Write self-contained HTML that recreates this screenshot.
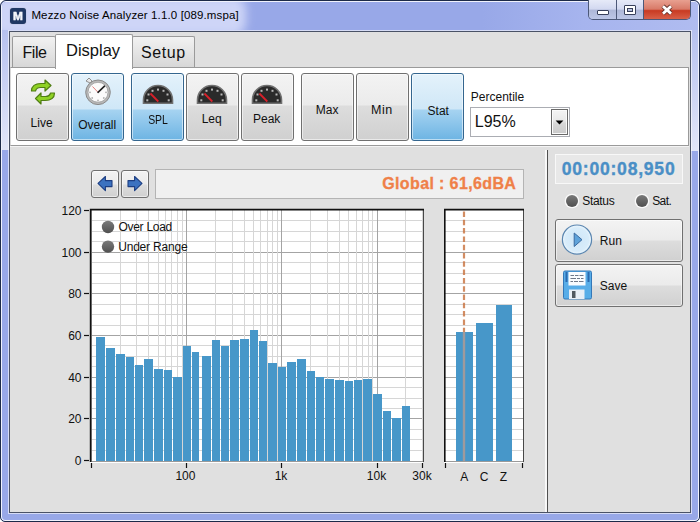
<!DOCTYPE html>
<html><head><meta charset="utf-8"><style>
html,body{margin:0;padding:0;width:700px;height:522px;overflow:hidden;background:#fff}
.t{position:absolute;white-space:nowrap;line-height:1;font-family:"Liberation Sans", sans-serif}
</style></head><body>
<div style="position:absolute;left:0;top:0;width:700px;height:522px;box-sizing:border-box;border:1px solid #1c2a48;border-radius:6px 6px 5px 5px;background:#98a8e8;overflow:hidden"><div style="position:absolute;left:0;top:0;right:0;bottom:0;border:1px solid rgba(255,255,255,0.85);border-radius:5px 5px 4px 4px"></div></div>
<div style="position:absolute;left:2px;top:2px;width:696px;height:28px;border-radius:4px 4px 0 0;overflow:hidden;background:linear-gradient(to right,#98a8e8 0px,#98a8e8 480px,#a6b4ee 580px,#b0bcf0 696px)"><div style="position:absolute;left:-10px;top:-6px;width:254px;height:40px;border-radius:14px;background:#ced5f7;filter:blur(5px)"></div></div>
<div style="position:absolute;left:2px;top:30px;width:7px;height:120px;background:linear-gradient(#b6c1f0,#e2e6f8)"></div>
<div style="position:absolute;left:691px;top:30px;width:7px;height:121px;background:linear-gradient(#b6c1f0,#e2e6f8)"></div>
<div style="position:absolute;left:8px;top:30px;width:684px;height:484px;box-sizing:border-box;border:1px solid rgba(255,255,255,0.6)"></div>
<div style="position:absolute;left:9px;top:31px;width:682px;height:482px;box-sizing:border-box;border:1px solid #4a5266;background:#e0e0e0"></div>
<div style="position:absolute;left:10px;top:8px;width:16px;height:16px;border-radius:3px;background:#1f3864;box-shadow:0 0 1px #889"></div>
<div class="t" style="left:10px;top:10px;width:16px;text-align:center;font-size:11px;font-weight:bold;color:#f4f6fa;line-height:12px;-webkit-text-stroke:0.5px #f4f6fa;transform:scaleX(1.08)">M</div>
<div class="t" style="left:31.4px;top:10.37px;font-size:11.5px;color:#000;font-weight:normal;letter-spacing:0.13px">Mezzo Noise Analyzer 1.1.0 [089.mspa]</div>
<div style="position:absolute;left:588px;top:0px;width:103px;height:20px;box-sizing:border-box;border:1px solid #4c5878;border-top:none;border-radius:0 0 5px 5px;overflow:hidden"><div style="position:absolute;left:0;top:0;width:27px;height:19px;background:linear-gradient(#e6eaf8 0%,#d2d8f0 48%,#aeb8d8 53%,#bcc6e6 100%);border-right:1px solid #4c5878"></div><div style="position:absolute;left:28px;top:0;width:26px;height:19px;background:linear-gradient(#e6eaf8 0%,#d2d8f0 48%,#aeb8d8 53%,#bcc6e6 100%);border-right:1px solid #4c5878"></div><div style="position:absolute;left:55px;top:0;width:48px;height:19px;background:linear-gradient(#e8a090 0%,#d87a68 48%,#c83a22 56%,#d86048 100%)"></div></div>
<div style="position:absolute;left:597px;top:10px;width:12px;height:5px;box-sizing:border-box;background:#fff;border:1px solid #38405a;border-radius:1px"></div>
<div style="position:absolute;left:624px;top:5px;width:12px;height:10px;box-sizing:border-box;background:transparent;border:1px solid #38405a;border-radius:1px"><div style="position:absolute;left:0;top:0;width:10px;height:8px;box-sizing:border-box;border:2px solid #fff;border-top-width:2px"></div><div style="position:absolute;left:2px;top:2px;width:6px;height:4px;box-sizing:border-box;border:1px solid #38405a"></div></div>
<svg style="position:absolute;left:660px;top:4px" width="14" height="12" viewBox="0 0 14 12"><path d="M3 2.2 L11 9.6 M11 2.2 L3 9.6" stroke="#5a2a22" stroke-width="4.4" stroke-linecap="butt"/><path d="M3 2.2 L11 9.6 M11 2.2 L3 9.6" stroke="#fff" stroke-width="2.8" stroke-linecap="butt"/></svg>
<div style="position:absolute;left:12px;top:36px;width:44px;height:32px;box-sizing:border-box;border:1px solid #9a9a9a;border-bottom:none;border-radius:2px 2px 0 0;background:linear-gradient(#f2f2f2,#e4e4e4 50%,#d6d6d6)"></div>
<div style="position:absolute;left:132px;top:36px;width:63px;height:32px;box-sizing:border-box;border:1px solid #9a9a9a;border-bottom:none;border-radius:2px 2px 0 0;background:linear-gradient(#f2f2f2,#e4e4e4 50%,#d6d6d6)"></div>
<div style="position:absolute;left:10px;top:67px;width:679px;height:79px;box-sizing:border-box;border-top:1px solid #9a9a9a;border-bottom:1px solid #9a9a9a;border-right:1px solid #9a9a9a;border-left:1px solid #d8d8d8;background:#fff"></div>
<div style="position:absolute;left:55px;top:34px;width:78px;height:35px;box-sizing:border-box;border:1px solid #9a9a9a;border-bottom:none;border-radius:2px 2px 0 0;background:#fff"></div>
<div class="t" style="left:22.6px;top:44.86px;font-size:16px;color:#111;font-weight:normal;letter-spacing:-0.5px">File</div>
<div class="t" style="left:66px;top:41.83px;font-size:16.5px;color:#111;font-weight:normal;">Display</div>
<div class="t" style="left:141px;top:44.86px;font-size:16px;color:#111;font-weight:normal;letter-spacing:0.6px">Setup</div>
<div style="position:absolute;left:16px;top:73px;width:53px;height:68px;box-sizing:border-box;border:1px solid #707070;border-radius:3px;background:linear-gradient(#f3f3f3 0px,#ebebeb 31px,#dddddd 32px,#cfcfcf 68px);box-shadow:inset 0 0 0 1px rgba(255,255,255,0.55)"></div>
<div style="position:absolute;left:71px;top:73px;width:53px;height:68px;box-sizing:border-box;border:1px solid #34668f;border-radius:3px;background:linear-gradient(#e4f2fb 0px,#cfe7f7 35px,#a6d3f1 36px,#69b2e2 68px);box-shadow:inset 0 0 0 1px rgba(255,255,255,0.55)"></div>
<div style="position:absolute;left:131px;top:73px;width:53px;height:68px;box-sizing:border-box;border:1px solid #34668f;border-radius:3px;background:linear-gradient(#e4f2fb 0px,#cfe7f7 35px,#a6d3f1 36px,#69b2e2 68px);box-shadow:inset 0 0 0 1px rgba(255,255,255,0.55)"></div>
<div style="position:absolute;left:186px;top:73px;width:53px;height:68px;box-sizing:border-box;border:1px solid #707070;border-radius:3px;background:linear-gradient(#f3f3f3 0px,#ebebeb 31px,#dddddd 32px,#cfcfcf 68px);box-shadow:inset 0 0 0 1px rgba(255,255,255,0.55)"></div>
<div style="position:absolute;left:241px;top:73px;width:53px;height:68px;box-sizing:border-box;border:1px solid #707070;border-radius:3px;background:linear-gradient(#f3f3f3 0px,#ebebeb 31px,#dddddd 32px,#cfcfcf 68px);box-shadow:inset 0 0 0 1px rgba(255,255,255,0.55)"></div>
<div style="position:absolute;left:301px;top:73px;width:53px;height:68px;box-sizing:border-box;border:1px solid #707070;border-radius:3px;background:linear-gradient(#f3f3f3 0px,#ebebeb 31px,#dddddd 32px,#cfcfcf 68px);box-shadow:inset 0 0 0 1px rgba(255,255,255,0.55)"></div>
<div style="position:absolute;left:356px;top:73px;width:53px;height:68px;box-sizing:border-box;border:1px solid #707070;border-radius:3px;background:linear-gradient(#f3f3f3 0px,#ebebeb 31px,#dddddd 32px,#cfcfcf 68px);box-shadow:inset 0 0 0 1px rgba(255,255,255,0.55)"></div>
<div style="position:absolute;left:411px;top:73px;width:53px;height:68px;box-sizing:border-box;border:1px solid #34668f;border-radius:3px;background:linear-gradient(#e4f2fb 0px,#cfe7f7 35px,#a6d3f1 36px,#69b2e2 68px);box-shadow:inset 0 0 0 1px rgba(255,255,255,0.55)"></div>
<div class="t" style="left:11.60px;width:60px;text-align:center;top:117.44px;font-size:12px;color:#111;font-weight:normal;">Live</div>
<div class="t" style="left:67.20px;width:60px;text-align:center;top:118.94px;font-size:12px;color:#111;font-weight:normal;">Overall</div>
<div class="t" style="left:128.40px;width:60px;text-align:center;top:113.84px;font-size:12px;color:#111;font-weight:normal;transform:scaleX(0.87)">SPL</div>
<div class="t" style="left:181.70px;width:60px;text-align:center;top:112.84px;font-size:12px;color:#111;font-weight:normal;">Leq</div>
<div class="t" style="left:236.70px;width:60px;text-align:center;top:112.84px;font-size:12px;color:#111;font-weight:normal;">Peak</div>
<div class="t" style="left:297.20px;width:60px;text-align:center;top:103.84px;font-size:12px;color:#111;font-weight:normal;">Max</div>
<div class="t" style="left:351.80px;width:60px;text-align:center;top:104.02px;font-size:12.5px;color:#111;font-weight:normal;letter-spacing:0.5px">Min</div>
<div class="t" style="left:408.30px;width:60px;text-align:center;top:104.74px;font-size:12px;color:#111;font-weight:normal;">Stat</div>
<svg style="position:absolute;left:28px;top:78px" width="30" height="28" viewBox="0 0 30 28">
<path d="M3.5 13 C3.5 8 7 5.5 13 5.5 L17 5.5 L17 2 L23 7.5 L17 13 L17 9.5 L12.5 9.5 C9 9.5 8 11 7.5 13 Z" fill="#8fd124" stroke="#4f7d12" stroke-width="1.2" stroke-linejoin="round"/>
<path d="M26.5 15 C26.5 20 23 22.5 17 22.5 L13 22.5 L13 26 L7.5 20.5 L13 15 L13 18.5 L17.5 18.5 C21 18.5 22 17 22.5 15 Z" fill="#8fd124" stroke="#4f7d12" stroke-width="1.2" stroke-linejoin="round"/>
</svg>
<svg style="position:absolute;left:82px;top:76px" width="32" height="32" viewBox="0 0 32 32">
<path d="M4 5 L7 2 L10 5 L8 7 Z" fill="#e8e8e8" stroke="#909090" stroke-width="1"/>
<circle cx="16" cy="16.3" r="12.3" fill="#b8b8b8" stroke="#8a8a8a" stroke-width="1"/>
<circle cx="16" cy="16.3" r="10" fill="#fbfbfb" stroke="#a0a0a0" stroke-width="0.8"/>
<g fill="#b0b0b0"><circle cx="16" cy="24.5" r="0.9"/><circle cx="10.2" cy="22" r="0.9"/><circle cx="21.8" cy="22" r="0.9"/><circle cx="8" cy="16.3" r="0.9"/><circle cx="24" cy="16.3" r="0.9"/></g>
<path d="M16 16.3 L10.5 10.5" stroke="#e07070" stroke-width="0.9"/>
<path d="M16 16.3 L22.5 10.2" stroke="#222" stroke-width="1.6" stroke-linecap="round"/>
</svg>
<svg style="position:absolute;left:142px;top:84px" width="32" height="22" viewBox="0 0 32 22">
<path d="M1.5 19.2 L1.5 16 A14.5 14.5 0 0 1 30.5 16 L30.5 19.2 Z" fill="#2a2a2a" stroke="#707070" stroke-width="1.6"/>
<g fill="#b8b8b8"><rect x="4.3" y="15.3" width="2" height="2"/><rect x="5.5" y="9.5" width="2" height="2"/><rect x="9.5" y="5.8" width="2" height="2"/><rect x="15" y="4.6" width="2" height="2"/><rect x="20.5" y="5.8" width="2" height="2"/><rect x="24.5" y="9.5" width="2" height="2"/><rect x="25.7" y="15.3" width="2" height="2"/></g>
<path d="M8.4 9.5 L16.3 17.5" stroke="#d8202a" stroke-width="1.8"/>
</svg>
<svg style="position:absolute;left:196px;top:84px" width="32" height="22" viewBox="0 0 32 22">
<path d="M1.5 19.2 L1.5 16 A14.5 14.5 0 0 1 30.5 16 L30.5 19.2 Z" fill="#2a2a2a" stroke="#707070" stroke-width="1.6"/>
<g fill="#b8b8b8"><rect x="4.3" y="15.3" width="2" height="2"/><rect x="5.5" y="9.5" width="2" height="2"/><rect x="9.5" y="5.8" width="2" height="2"/><rect x="15" y="4.6" width="2" height="2"/><rect x="20.5" y="5.8" width="2" height="2"/><rect x="24.5" y="9.5" width="2" height="2"/><rect x="25.7" y="15.3" width="2" height="2"/></g>
<path d="M8.4 9.5 L16.3 17.5" stroke="#d8202a" stroke-width="1.8"/>
</svg>
<svg style="position:absolute;left:251px;top:84px" width="32" height="22" viewBox="0 0 32 22">
<path d="M1.5 19.2 L1.5 16 A14.5 14.5 0 0 1 30.5 16 L30.5 19.2 Z" fill="#2a2a2a" stroke="#707070" stroke-width="1.6"/>
<g fill="#b8b8b8"><rect x="4.3" y="15.3" width="2" height="2"/><rect x="5.5" y="9.5" width="2" height="2"/><rect x="9.5" y="5.8" width="2" height="2"/><rect x="15" y="4.6" width="2" height="2"/><rect x="20.5" y="5.8" width="2" height="2"/><rect x="24.5" y="9.5" width="2" height="2"/><rect x="25.7" y="15.3" width="2" height="2"/></g>
<path d="M8.4 9.5 L16.3 17.5" stroke="#d8202a" stroke-width="1.8"/>
</svg>
<div class="t" style="left:470.8px;top:90.84px;font-size:12px;color:#111;font-weight:normal;">Percentile</div>
<div style="position:absolute;left:470px;top:107px;width:100px;height:30px;box-sizing:border-box;border:1px solid #abadb3;background:#fff"></div>
<div style="position:absolute;left:551px;top:109px;width:17px;height:26px;box-sizing:border-box;border:1px solid #6a6a6a;background:linear-gradient(#f4f4f4,#e8e8e8 45%,#d8d8d8 55%,#cacaca);box-shadow:inset 0 0 0 1px #fafafa"></div>
<svg style="position:absolute;left:555px;top:119.6px" width="9" height="6"><path d="M0.6 0.4 L8.4 0.4 L4.5 4.5 Z" fill="#000"/></svg>
<div class="t" style="left:474.8px;top:114.16px;font-size:16px;color:#111;font-weight:normal;">L95%</div>
<div style="position:absolute;left:10px;top:146px;width:679px;height:1px;box-sizing:border-box;background:#f4f4f4"></div>
<div style="position:absolute;left:545px;top:150px;width:2px;height:362px;box-sizing:border-box;background:#f8f8f8"></div>
<div style="position:absolute;left:547px;top:150px;width:1px;height:362px;box-sizing:border-box;background:#505050"></div>
<div style="position:absolute;left:91px;top:170px;width:28px;height:28px;box-sizing:border-box;border:1px solid #707070;border-radius:3px;background:linear-gradient(#f3f3f3 0px,#ebebeb 13px,#dddddd 14px,#cfcfcf 27px);box-shadow:inset 0 0 0 1px rgba(255,255,255,0.55)"></div>
<div style="position:absolute;left:121px;top:170px;width:28px;height:28px;box-sizing:border-box;border:1px solid #707070;border-radius:3px;background:linear-gradient(#f3f3f3 0px,#ebebeb 13px,#dddddd 14px,#cfcfcf 27px);box-shadow:inset 0 0 0 1px rgba(255,255,255,0.55)"></div>
<svg style="position:absolute;left:96px;top:175px" width="18" height="18" viewBox="0 0 18 18">
<path d="M2 8.4 L9.4 1.5 L9.4 5.6 L16 5.6 L16 11.6 L9.4 11.6 L9.4 15.7 Z" fill="#3c72c0" stroke="#1d3e82" stroke-width="1.1" stroke-linejoin="round"/></svg>
<svg style="position:absolute;left:126px;top:175px" width="18" height="18" viewBox="0 0 18 18">
<path d="M16 8.4 L8.6 1.5 L8.6 5.6 L2 5.6 L2 11.6 L8.6 11.6 L8.6 15.7 Z" fill="#3c72c0" stroke="#1d3e82" stroke-width="1.1" stroke-linejoin="round"/></svg>
<div style="position:absolute;left:155px;top:169px;width:369px;height:30px;box-sizing:border-box;border:1px solid #b4b4b4;background:#f0f0f0"></div>
<div class="t" style="left:216.30px;width:300px;text-align:right;top:176.16px;font-size:16px;color:#ef8048;font-weight:bold;letter-spacing:0.38px;-webkit-text-stroke:0.3px #ef8048">Global : 61,6dBA</div>
<svg style="position:absolute;left:0;top:0" width="700" height="522" viewBox="0 0 700 522">
<rect x="90" y="209" width="333" height="254" fill="#fff"/>
<line x1="90" x2="423" y1="450.5" y2="450.5" stroke="#d6d6d6" stroke-width="1"/>
<line x1="90" x2="423" y1="439.5" y2="439.5" stroke="#d6d6d6" stroke-width="1"/>
<line x1="90" x2="423" y1="429.5" y2="429.5" stroke="#d6d6d6" stroke-width="1"/>
<line x1="90" x2="423" y1="418.5" y2="418.5" stroke="#a4a4a4" stroke-width="1"/>
<line x1="90" x2="423" y1="408.5" y2="408.5" stroke="#d6d6d6" stroke-width="1"/>
<line x1="90" x2="423" y1="398.5" y2="398.5" stroke="#d6d6d6" stroke-width="1"/>
<line x1="90" x2="423" y1="387.5" y2="387.5" stroke="#d6d6d6" stroke-width="1"/>
<line x1="90" x2="423" y1="377.5" y2="377.5" stroke="#a4a4a4" stroke-width="1"/>
<line x1="90" x2="423" y1="366.5" y2="366.5" stroke="#d6d6d6" stroke-width="1"/>
<line x1="90" x2="423" y1="356.5" y2="356.5" stroke="#d6d6d6" stroke-width="1"/>
<line x1="90" x2="423" y1="345.5" y2="345.5" stroke="#d6d6d6" stroke-width="1"/>
<line x1="90" x2="423" y1="335.5" y2="335.5" stroke="#a4a4a4" stroke-width="1"/>
<line x1="90" x2="423" y1="325.5" y2="325.5" stroke="#d6d6d6" stroke-width="1"/>
<line x1="90" x2="423" y1="314.5" y2="314.5" stroke="#d6d6d6" stroke-width="1"/>
<line x1="90" x2="423" y1="304.5" y2="304.5" stroke="#d6d6d6" stroke-width="1"/>
<line x1="90" x2="423" y1="293.5" y2="293.5" stroke="#a4a4a4" stroke-width="1"/>
<line x1="90" x2="423" y1="283.5" y2="283.5" stroke="#d6d6d6" stroke-width="1"/>
<line x1="90" x2="423" y1="273.5" y2="273.5" stroke="#d6d6d6" stroke-width="1"/>
<line x1="90" x2="423" y1="262.5" y2="262.5" stroke="#d6d6d6" stroke-width="1"/>
<line x1="90" x2="423" y1="252.5" y2="252.5" stroke="#a4a4a4" stroke-width="1"/>
<line x1="90" x2="423" y1="241.5" y2="241.5" stroke="#d6d6d6" stroke-width="1"/>
<line x1="90" x2="423" y1="231.5" y2="231.5" stroke="#d6d6d6" stroke-width="1"/>
<line x1="90" x2="423" y1="220.5" y2="220.5" stroke="#d6d6d6" stroke-width="1"/>
<line x1="91.5" x2="91.5" y1="209" y2="461" stroke="#a4a4a4" stroke-width="1"/>
<line x1="120.5" x2="120.5" y1="209" y2="461" stroke="#d6d6d6" stroke-width="1"/>
<line x1="136.5" x2="136.5" y1="209" y2="461" stroke="#d6d6d6" stroke-width="1"/>
<line x1="148.5" x2="148.5" y1="209" y2="461" stroke="#d6d6d6" stroke-width="1"/>
<line x1="158.5" x2="158.5" y1="209" y2="461" stroke="#d6d6d6" stroke-width="1"/>
<line x1="165.5" x2="165.5" y1="209" y2="461" stroke="#d6d6d6" stroke-width="1"/>
<line x1="171.5" x2="171.5" y1="209" y2="461" stroke="#d6d6d6" stroke-width="1"/>
<line x1="177.5" x2="177.5" y1="209" y2="461" stroke="#d6d6d6" stroke-width="1"/>
<line x1="182.5" x2="182.5" y1="209" y2="461" stroke="#d6d6d6" stroke-width="1"/>
<line x1="186.5" x2="186.5" y1="209" y2="461" stroke="#a4a4a4" stroke-width="1"/>
<line x1="215.5" x2="215.5" y1="209" y2="461" stroke="#d6d6d6" stroke-width="1"/>
<line x1="232.5" x2="232.5" y1="209" y2="461" stroke="#d6d6d6" stroke-width="1"/>
<line x1="244.5" x2="244.5" y1="209" y2="461" stroke="#d6d6d6" stroke-width="1"/>
<line x1="253.5" x2="253.5" y1="209" y2="461" stroke="#d6d6d6" stroke-width="1"/>
<line x1="260.5" x2="260.5" y1="209" y2="461" stroke="#d6d6d6" stroke-width="1"/>
<line x1="267.5" x2="267.5" y1="209" y2="461" stroke="#d6d6d6" stroke-width="1"/>
<line x1="272.5" x2="272.5" y1="209" y2="461" stroke="#d6d6d6" stroke-width="1"/>
<line x1="277.5" x2="277.5" y1="209" y2="461" stroke="#d6d6d6" stroke-width="1"/>
<line x1="281.5" x2="281.5" y1="209" y2="461" stroke="#a4a4a4" stroke-width="1"/>
<line x1="310.5" x2="310.5" y1="209" y2="461" stroke="#d6d6d6" stroke-width="1"/>
<line x1="327.5" x2="327.5" y1="209" y2="461" stroke="#d6d6d6" stroke-width="1"/>
<line x1="339.5" x2="339.5" y1="209" y2="461" stroke="#d6d6d6" stroke-width="1"/>
<line x1="348.5" x2="348.5" y1="209" y2="461" stroke="#d6d6d6" stroke-width="1"/>
<line x1="356.5" x2="356.5" y1="209" y2="461" stroke="#d6d6d6" stroke-width="1"/>
<line x1="362.5" x2="362.5" y1="209" y2="461" stroke="#d6d6d6" stroke-width="1"/>
<line x1="368.5" x2="368.5" y1="209" y2="461" stroke="#d6d6d6" stroke-width="1"/>
<line x1="372.5" x2="372.5" y1="209" y2="461" stroke="#d6d6d6" stroke-width="1"/>
<line x1="377.5" x2="377.5" y1="209" y2="461" stroke="#a4a4a4" stroke-width="1"/>
<line x1="405.5" x2="405.5" y1="209" y2="461" stroke="#d6d6d6" stroke-width="1"/>
<line x1="422.5" x2="422.5" y1="209" y2="461" stroke="#d6d6d6" stroke-width="1"/>
<g shape-rendering="crispEdges">
<rect x="96" y="337" width="9" height="124" fill="#4797c9"/>
<rect x="106" y="348" width="9" height="113" fill="#4797c9"/>
<rect x="116" y="354" width="9" height="107" fill="#4797c9"/>
<rect x="126" y="357" width="8" height="104" fill="#4797c9"/>
<rect x="135" y="365" width="8" height="96" fill="#4797c9"/>
<rect x="144" y="359" width="9" height="102" fill="#4797c9"/>
<rect x="154" y="369" width="9" height="92" fill="#4797c9"/>
<rect x="164" y="370" width="8" height="91" fill="#4797c9"/>
<rect x="173" y="377" width="9" height="84" fill="#4797c9"/>
<rect x="183" y="346" width="8" height="115" fill="#4797c9"/>
<rect x="192" y="352" width="7" height="109" fill="#4797c9"/>
<rect x="202" y="356" width="9" height="105" fill="#4797c9"/>
<rect x="212" y="340" width="8" height="121" fill="#4797c9"/>
<rect x="221" y="346" width="8" height="115" fill="#4797c9"/>
<rect x="230" y="340" width="9" height="121" fill="#4797c9"/>
<rect x="240" y="339" width="9" height="122" fill="#4797c9"/>
<rect x="250" y="330" width="8" height="131" fill="#4797c9"/>
<rect x="259" y="341" width="8" height="120" fill="#4797c9"/>
<rect x="268" y="363" width="9" height="98" fill="#4797c9"/>
<rect x="278" y="367" width="8" height="94" fill="#4797c9"/>
<rect x="287" y="362" width="9" height="99" fill="#4797c9"/>
<rect x="297" y="359" width="9" height="102" fill="#4797c9"/>
<rect x="307" y="371" width="8" height="90" fill="#4797c9"/>
<rect x="316" y="377" width="8" height="84" fill="#4797c9"/>
<rect x="325" y="379" width="9" height="82" fill="#4797c9"/>
<rect x="335" y="380" width="9" height="81" fill="#4797c9"/>
<rect x="345" y="381" width="8" height="80" fill="#4797c9"/>
<rect x="354" y="380" width="8" height="81" fill="#4797c9"/>
<rect x="363" y="379" width="9" height="82" fill="#4797c9"/>
<rect x="373" y="394" width="9" height="67" fill="#4797c9"/>
<rect x="383" y="411" width="8" height="50" fill="#4797c9"/>
<rect x="392" y="418" width="9" height="43" fill="#4797c9"/>
<rect x="402" y="406" width="8" height="55" fill="#4797c9"/>
</g>
<line x1="90" x2="424" y1="461.5" y2="461.5" stroke="#9a9a9a" stroke-width="1"/>
<line x1="423.5" x2="423.5" y1="209" y2="462" stroke="#484848" stroke-width="1"/>
<path d="M90.6 462 L90.6 209.6 L424 209.6" fill="none" stroke="#111" stroke-width="1.6"/>
<line x1="84" x2="89" y1="460.5" y2="460.5" stroke="#111" stroke-width="1.2"/>
<line x1="84" x2="89" y1="418.5" y2="418.5" stroke="#111" stroke-width="1.2"/>
<line x1="84" x2="89" y1="377.5" y2="377.5" stroke="#111" stroke-width="1.2"/>
<line x1="84" x2="89" y1="335.5" y2="335.5" stroke="#111" stroke-width="1.2"/>
<line x1="84" x2="89" y1="293.5" y2="293.5" stroke="#111" stroke-width="1.2"/>
<line x1="84" x2="89" y1="252.5" y2="252.5" stroke="#111" stroke-width="1.2"/>
<line x1="84" x2="89" y1="210.5" y2="210.5" stroke="#111" stroke-width="1.2"/>
<line x1="91.5" x2="91.5" y1="463" y2="468" stroke="#111" stroke-width="1.2"/>
<line x1="186.5" x2="186.5" y1="463" y2="468" stroke="#111" stroke-width="1.2"/>
<line x1="281.5" x2="281.5" y1="463" y2="468" stroke="#111" stroke-width="1.2"/>
<line x1="377.5" x2="377.5" y1="463" y2="468" stroke="#111" stroke-width="1.2"/>
<line x1="422.5" x2="422.5" y1="463" y2="468" stroke="#111" stroke-width="1.2"/>
<rect x="444" y="209" width="79" height="254" fill="#fff"/>
<line x1="444" x2="523" y1="450.5" y2="450.5" stroke="#d6d6d6" stroke-width="1"/>
<line x1="444" x2="523" y1="439.5" y2="439.5" stroke="#d6d6d6" stroke-width="1"/>
<line x1="444" x2="523" y1="429.5" y2="429.5" stroke="#d6d6d6" stroke-width="1"/>
<line x1="444" x2="523" y1="418.5" y2="418.5" stroke="#a4a4a4" stroke-width="1"/>
<line x1="444" x2="523" y1="408.5" y2="408.5" stroke="#d6d6d6" stroke-width="1"/>
<line x1="444" x2="523" y1="398.5" y2="398.5" stroke="#d6d6d6" stroke-width="1"/>
<line x1="444" x2="523" y1="387.5" y2="387.5" stroke="#d6d6d6" stroke-width="1"/>
<line x1="444" x2="523" y1="377.5" y2="377.5" stroke="#a4a4a4" stroke-width="1"/>
<line x1="444" x2="523" y1="366.5" y2="366.5" stroke="#d6d6d6" stroke-width="1"/>
<line x1="444" x2="523" y1="356.5" y2="356.5" stroke="#d6d6d6" stroke-width="1"/>
<line x1="444" x2="523" y1="345.5" y2="345.5" stroke="#d6d6d6" stroke-width="1"/>
<line x1="444" x2="523" y1="335.5" y2="335.5" stroke="#a4a4a4" stroke-width="1"/>
<line x1="444" x2="523" y1="325.5" y2="325.5" stroke="#d6d6d6" stroke-width="1"/>
<line x1="444" x2="523" y1="314.5" y2="314.5" stroke="#d6d6d6" stroke-width="1"/>
<line x1="444" x2="523" y1="304.5" y2="304.5" stroke="#d6d6d6" stroke-width="1"/>
<line x1="444" x2="523" y1="293.5" y2="293.5" stroke="#a4a4a4" stroke-width="1"/>
<line x1="444" x2="523" y1="283.5" y2="283.5" stroke="#d6d6d6" stroke-width="1"/>
<line x1="444" x2="523" y1="273.5" y2="273.5" stroke="#d6d6d6" stroke-width="1"/>
<line x1="444" x2="523" y1="262.5" y2="262.5" stroke="#d6d6d6" stroke-width="1"/>
<line x1="444" x2="523" y1="252.5" y2="252.5" stroke="#a4a4a4" stroke-width="1"/>
<line x1="444" x2="523" y1="241.5" y2="241.5" stroke="#d6d6d6" stroke-width="1"/>
<line x1="444" x2="523" y1="231.5" y2="231.5" stroke="#d6d6d6" stroke-width="1"/>
<line x1="444" x2="523" y1="220.5" y2="220.5" stroke="#d6d6d6" stroke-width="1"/>
<g shape-rendering="crispEdges">
<rect x="456" y="332" width="17" height="129" fill="#4797c9"/>
<rect x="476" y="323" width="17" height="138" fill="#4797c9"/>
<rect x="496" y="305" width="16" height="156" fill="#4797c9"/>
</g>
<line x1="464" x2="464" y1="211.5" y2="332" stroke="#c8703c" stroke-opacity="0.8" stroke-width="2.2" stroke-dasharray="5.5 2.8"/>
<line x1="464" x2="464" y1="332" y2="461" stroke="#a09a9c" stroke-width="2.4"/>
<line x1="444" x2="524" y1="461.5" y2="461.5" stroke="#9a9a9a" stroke-width="1"/>
<line x1="523.5" x2="523.5" y1="209" y2="462" stroke="#484848" stroke-width="1"/>
<path d="M444.8 462 L444.8 209.6 L524 209.6" fill="none" stroke="#111" stroke-width="1.6"/>
<line x1="445.5" x2="445.5" y1="463" y2="468" stroke="#111" stroke-width="1.2"/>
<line x1="522.5" x2="522.5" y1="463" y2="468" stroke="#111" stroke-width="1.2"/>
<defs><linearGradient id="led" x1="0" y1="0" x2="0" y2="1"><stop offset="0" stop-color="#7a7a7a"/><stop offset="1" stop-color="#505050"/></linearGradient></defs>
<circle cx="108" cy="227" r="6.2" fill="url(#led)"/>
<circle cx="108" cy="246.6" r="6.2" fill="url(#led)"/>
<circle cx="572" cy="201" r="7.3" fill="#fafafa"/><circle cx="572" cy="201" r="6" fill="url(#led)"/>
<circle cx="642" cy="201" r="7.3" fill="#fafafa"/><circle cx="642" cy="201" r="6" fill="url(#led)"/>
</svg>
<div class="t" style="left:41.50px;width:40px;text-align:right;top:454.64px;font-size:12px;color:#111;font-weight:normal;">0</div>
<div class="t" style="left:41.50px;width:40px;text-align:right;top:412.64px;font-size:12px;color:#111;font-weight:normal;">20</div>
<div class="t" style="left:41.50px;width:40px;text-align:right;top:371.64px;font-size:12px;color:#111;font-weight:normal;">40</div>
<div class="t" style="left:41.50px;width:40px;text-align:right;top:329.64px;font-size:12px;color:#111;font-weight:normal;">60</div>
<div class="t" style="left:41.50px;width:40px;text-align:right;top:287.64px;font-size:12px;color:#111;font-weight:normal;">80</div>
<div class="t" style="left:41.50px;width:40px;text-align:right;top:246.64px;font-size:12px;color:#111;font-weight:normal;">100</div>
<div class="t" style="left:41.50px;width:40px;text-align:right;top:204.64px;font-size:12px;color:#111;font-weight:normal;">120</div>
<div class="t" style="left:160.40px;width:50px;text-align:center;top:469.94px;font-size:12px;color:#111;font-weight:normal;">100</div>
<div class="t" style="left:256.00px;width:50px;text-align:center;top:469.94px;font-size:12px;color:#111;font-weight:normal;">1k</div>
<div class="t" style="left:351.50px;width:50px;text-align:center;top:469.94px;font-size:12px;color:#111;font-weight:normal;">10k</div>
<div class="t" style="left:397.00px;width:50px;text-align:center;top:469.94px;font-size:12px;color:#111;font-weight:normal;">30k</div>
<div class="t" style="left:449.20px;width:30px;text-align:center;top:470.94px;font-size:12px;color:#111;font-weight:normal;">A</div>
<div class="t" style="left:469.20px;width:30px;text-align:center;top:470.94px;font-size:12px;color:#111;font-weight:normal;">C</div>
<div class="t" style="left:488.50px;width:30px;text-align:center;top:470.94px;font-size:12px;color:#111;font-weight:normal;">Z</div>
<div class="t" style="left:118.4px;top:220.94px;font-size:12px;color:#111;font-weight:normal;letter-spacing:-0.27px">Over Load</div>
<div class="t" style="left:118.2px;top:240.84px;font-size:12px;color:#111;font-weight:normal;letter-spacing:-0.2px">Under Range</div>
<div style="position:absolute;left:555px;top:154px;width:128px;height:30px;box-sizing:border-box;border:1px solid #f8f8f8;background:#e8e8e8"></div>
<div class="t" style="left:538.60px;width:160px;text-align:center;top:160.70px;font-size:17.6px;color:#4a8fc6;font-weight:bold;letter-spacing:0.75px;-webkit-text-stroke:0.35px #4a8fc6">00:00:08,950</div>
<div class="t" style="left:582.2px;top:194.64px;font-size:12px;color:#111;font-weight:normal;letter-spacing:-0.3px">Status</div>
<div class="t" style="left:652.2px;top:194.64px;font-size:12px;color:#111;font-weight:normal;letter-spacing:-0.6px">Sat.</div>
<div style="position:absolute;left:555px;top:219px;width:128px;height:43px;box-sizing:border-box;border:1px solid #707070;border-radius:3px;background:linear-gradient(#f3f3f3 0px,#ebebeb 20px,#dddddd 21px,#cfcfcf 43px);box-shadow:inset 0 0 0 1px rgba(255,255,255,0.55)"></div>
<div style="position:absolute;left:555px;top:264px;width:128px;height:43px;box-sizing:border-box;border:1px solid #707070;border-radius:3px;background:linear-gradient(#f3f3f3 0px,#ebebeb 20px,#dddddd 21px,#cfcfcf 43px);box-shadow:inset 0 0 0 1px rgba(255,255,255,0.55)"></div>
<div class="t" style="left:599.8px;top:234.84px;font-size:12px;color:#111;font-weight:normal;">Run</div>
<div class="t" style="left:599.8px;top:279.64px;font-size:12px;color:#111;font-weight:normal;">Save</div>
<svg style="position:absolute;left:560px;top:223px" width="34" height="34" viewBox="0 0 34 34">
<defs><radialGradient id="pg" cx="0.5" cy="0.5" r="0.5"><stop offset="0" stop-color="#cfe6f8"/><stop offset="0.8" stop-color="#d8ecfa"/><stop offset="1" stop-color="#eef7fd"/></radialGradient></defs>
<circle cx="17" cy="16.6" r="14.6" fill="url(#pg)" stroke="#5b86b0" stroke-width="1.2"/>
<path d="M14.2 10 L14.2 23.5 L22 16.7 Z" fill="#5ea2da" stroke="#3a6aa0" stroke-width="1" stroke-linejoin="round"/>
</svg>
<svg style="position:absolute;left:562px;top:270px" width="30" height="30" viewBox="0 0 30 30">
<rect x="1.5" y="1" width="28" height="28" rx="1.5" fill="#58ade8" stroke="#3478b8" stroke-width="1"/>
<rect x="3.5" y="2" width="2" height="10" fill="#2a6ab0"/><rect x="25.5" y="2" width="2" height="10" fill="#2a6ab0"/>
<rect x="6.5" y="2" width="17" height="13.5" fill="#fafcff"/>
<g stroke="#707888" stroke-width="1"><path d="M8.5 5.5 H12 M13 5.5 H16.5 M17.5 5.5 H21.5 M8.5 8.5 H14 M15 8.5 H18 M19 8.5 H21.5 M8.5 11.5 H11 M12 11.5 H16 M17 11.5 H21.5"/></g>
<rect x="7" y="19.5" width="15.5" height="9.5" fill="#e8eef6"/>
<rect x="10" y="21" width="3.5" height="7" fill="#505860"/>
</svg>
</body></html>
